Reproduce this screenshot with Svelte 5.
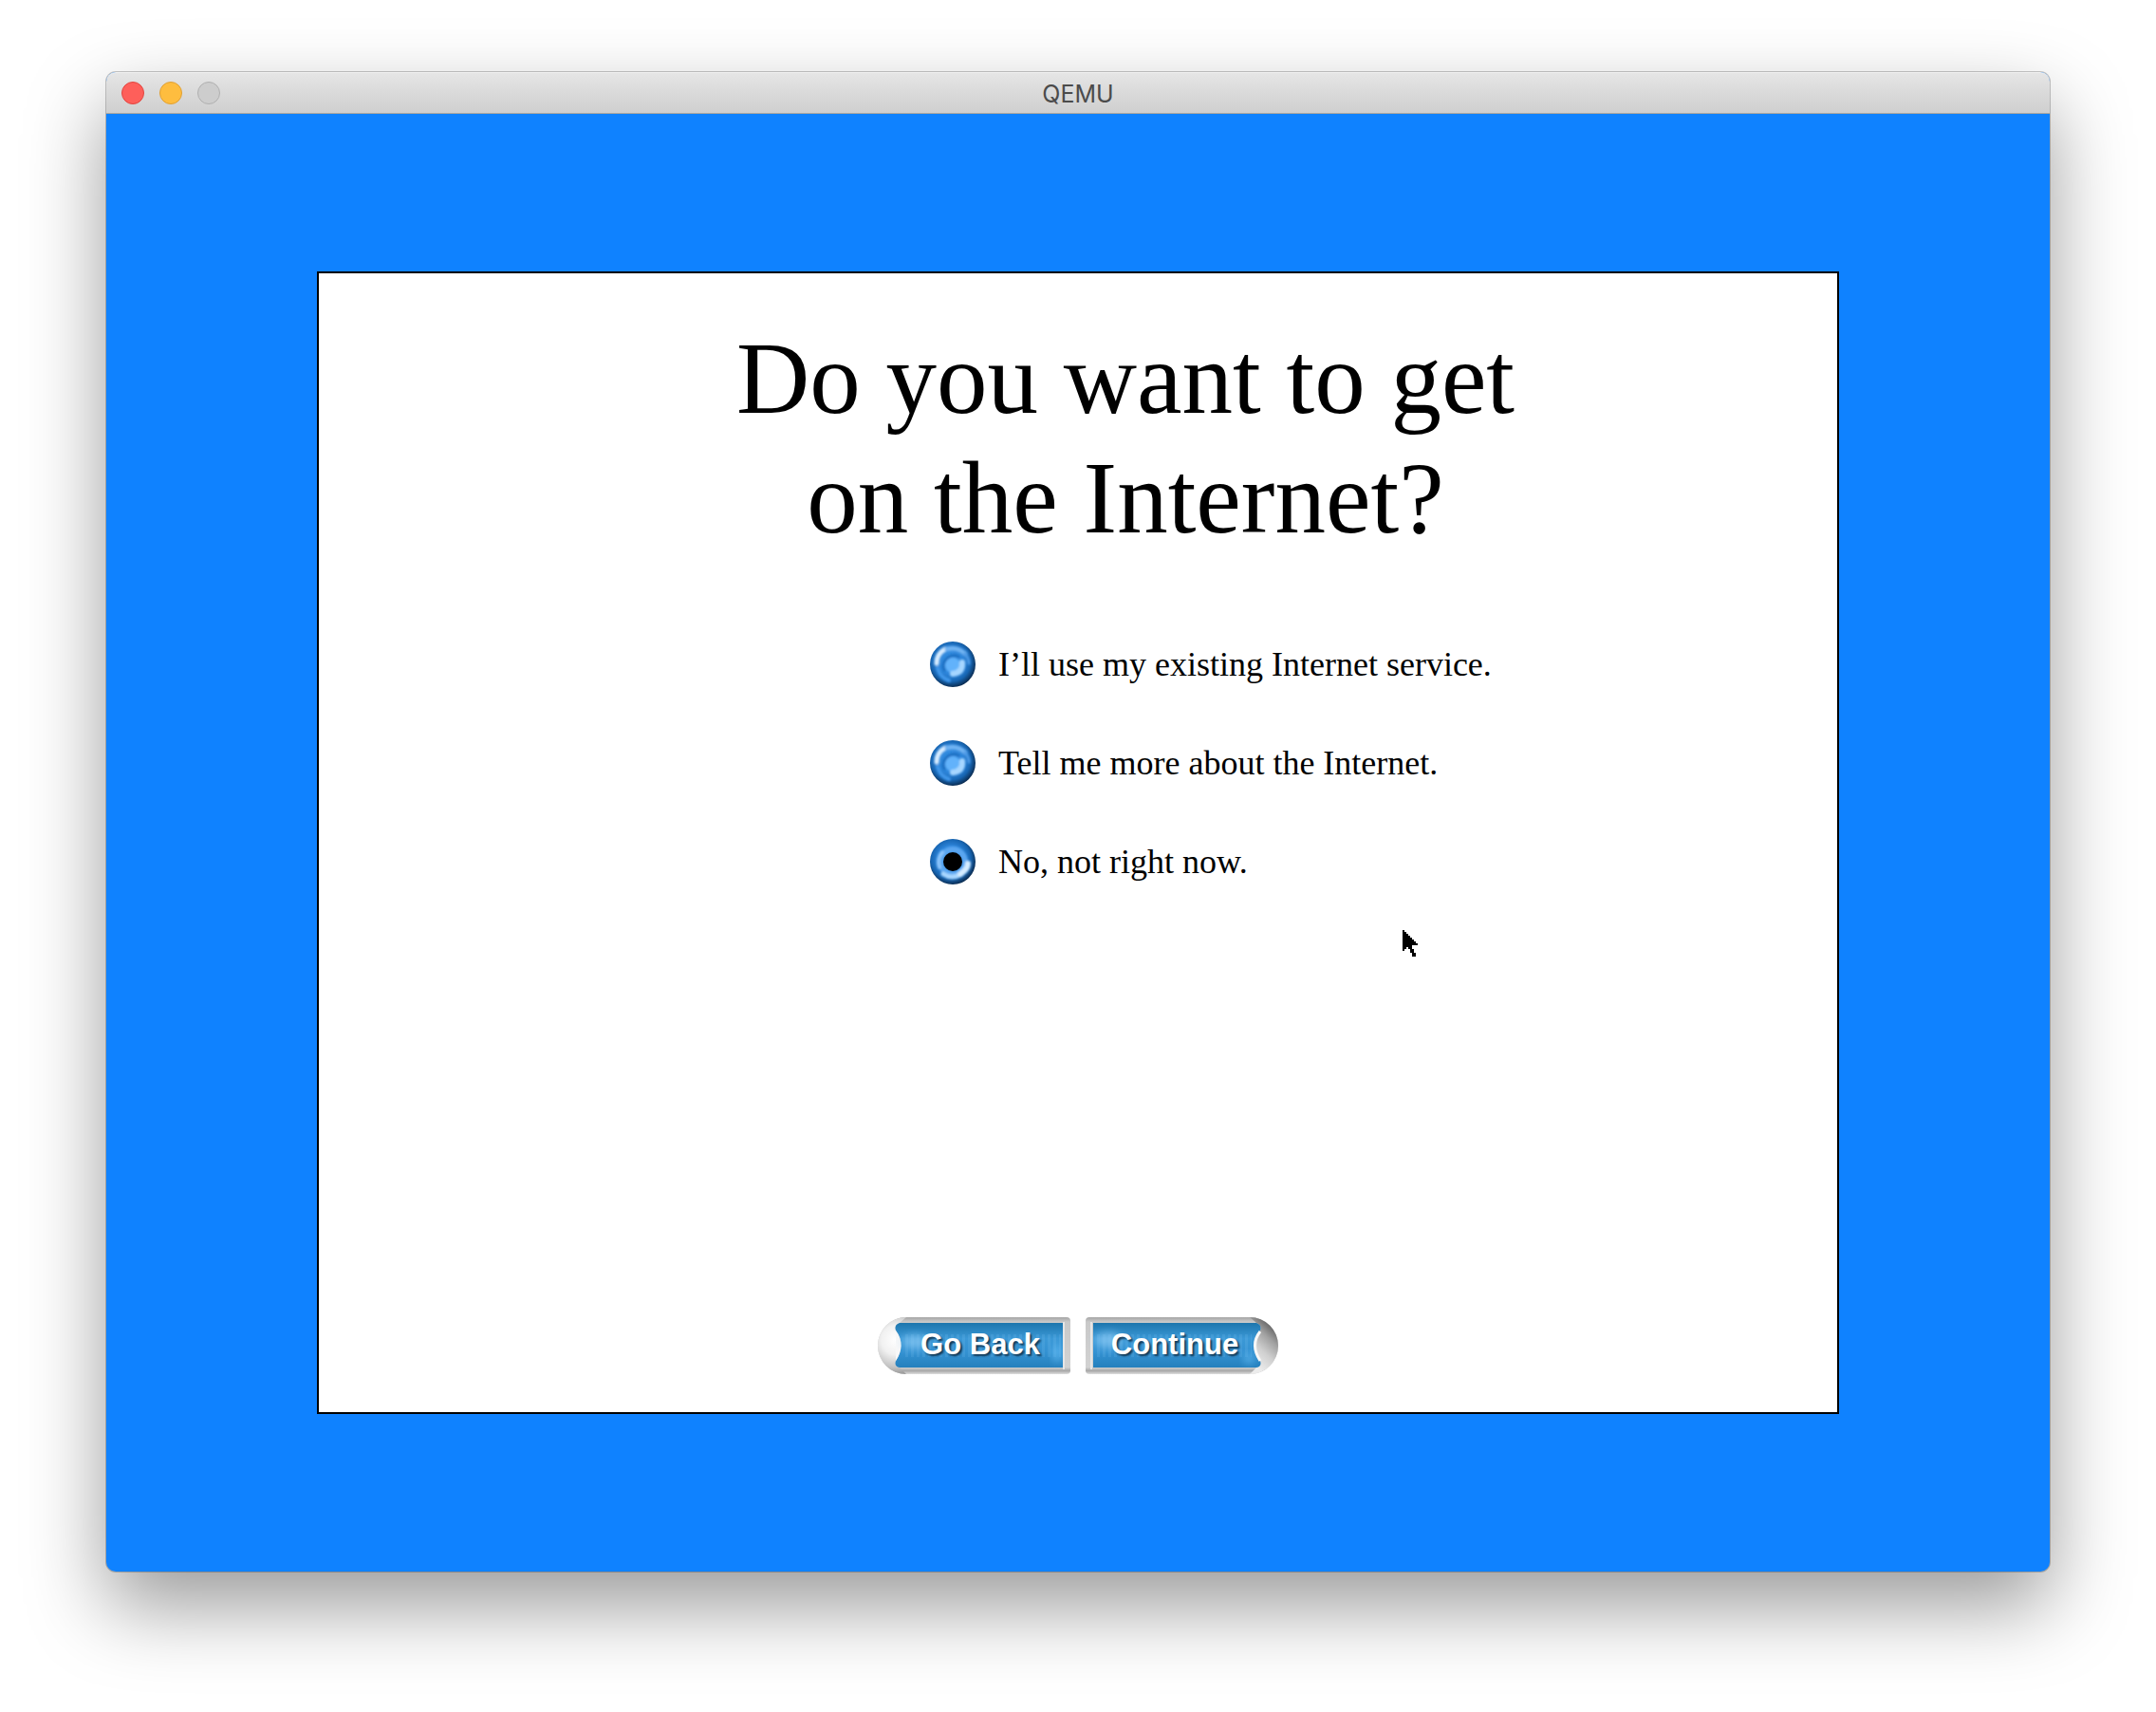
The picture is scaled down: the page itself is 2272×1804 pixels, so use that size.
<script>
  const options = [
    { value: 'existing', label: 'I’ll use my existing Internet service.' },
    { value: 'more', label: 'Tell me more about the Internet.' },
    { value: 'no', label: 'No, not right now.' }
  ];
  let choice = $state('no');
</script>

<svelte:head><title>QEMU</title></svelte:head>

<div class="page">
  <section class="window">
    <header class="titlebar">
      <div class="lights">
        <button class="light close" aria-label="Close"></button>
        <button class="light minimise" aria-label="Minimise"></button>
        <button class="light zoom" aria-label="Zoom" disabled></button>
      </div>
      <span class="title">QEMU</span>
    </header>

    <div class="desktop">
      <main class="card">
        <h1>Do you want to get<br />on the Internet?</h1>

        <div class="options" role="radiogroup" aria-label="Internet setup">
          {#each options as option}
            <label class="option">
              <span class="radio">
                <input type="radio" name="internet" value={option.value} bind:group={choice} />
                <svg viewBox="0 0 48 48" aria-hidden="true">
                  <defs>
                    <radialGradient id="ball-{option.value}" cx="0.46" cy="0.44" r="0.57">
                      <stop offset="0" stop-color="#3f97ea" />
                      <stop offset="0.5" stop-color="#2b83d8" />
                      <stop offset="0.76" stop-color="#1765b2" />
                      <stop offset="1" stop-color="#0a2a4e" />
                    </radialGradient>
                    <filter id="soft-{option.value}" x="-50%" y="-50%" width="200%" height="200%">
                      <feGaussianBlur stdDeviation="1.3" />
                    </filter>
                  </defs>
                  <circle cx="24" cy="24" r="24" fill="url(#ball-{option.value})" />
                  {#if choice === option.value}
                    <g filter="url(#soft-{option.value})" fill="none" stroke-linecap="round">
                      <circle cx="24" cy="24" r="13" stroke="#5aa6f0" stroke-width="6" />
                      <path d="M13 14A15 15 0 0 0 10 30" stroke="#8cc5fb" stroke-width="4" />
                      <path d="M14 37Q23 43 33 37" stroke="#a9d7ff" stroke-width="5" />
                      <path d="M32 37Q40 32 40 26" stroke="#d5ecff" stroke-width="6" />
                    </g>
                    <circle cx="24" cy="24" r="10" fill="#000" />
                  {:else}
                    <g filter="url(#soft-{option.value})" fill="none" stroke-linecap="round">
                      <path d="M7 23Q7 13 16 8" stroke="#d6ebff" stroke-width="5" />
                      <path d="M18 8Q29 5 37 13" stroke="#6fb2f2" stroke-width="5" />
                      <path d="M37 13Q41 18 41 23" stroke="#4d9ae6" stroke-width="3" />
                      <path d="M8 28Q11 38 20 41" stroke="#3f96e9" stroke-width="4" />
                      <circle cx="24" cy="25" r="8" fill="#62b2fb" stroke="none" />
                      <path d="M15 30A11 11 0 0 1 30 16" stroke="#1b6fc2" stroke-width="3" />
                      <path d="M24 34Q35 33 34 22" stroke="#a6d6ff" stroke-width="6" />
                    </g>
                  {/if}
                </svg>
              </span>
              <span>{option.label}</span>
            </label>
          {/each}
        </div>

        <div class="actions">
          <button class="nav">
            <svg viewBox="0 0 204 60" aria-hidden="true">
              <defs>
                <linearGradient id="face" x1="0" y1="0" x2="0" y2="1">
                  <stop offset="0" stop-color="#1d76ad" />
                  <stop offset="0.35" stop-color="#3b98d6" />
                  <stop offset="0.65" stop-color="#3492d2" />
                  <stop offset="1" stop-color="#2580bd" />
                </linearGradient>
                <linearGradient id="rim" x1="0" y1="0" x2="0" y2="1">
                  <stop offset="0" stop-color="#a5a5a5" />
                  <stop offset="0.08" stop-color="#c9c9c9" />
                  <stop offset="0.88" stop-color="#d2d2d2" />
                  <stop offset="0.94" stop-color="#a8a8a8" />
                  <stop offset="1" stop-color="#dedede" />
                </linearGradient>
                <radialGradient id="cap-left" gradientUnits="userSpaceOnUse" cx="20" cy="24" r="38">
                  <stop offset="0" stop-color="#fff" />
                  <stop offset="0.4" stop-color="#f1f1f1" />
                  <stop offset="0.75" stop-color="#c4c4c4" />
                  <stop offset="1" stop-color="#909090" />
                </radialGradient>
                <pattern id="ribs" width="6" height="60" patternUnits="userSpaceOnUse">
                  <rect width="3" height="60" fill="#8fd0fa" opacity="0.14" />
                </pattern>
                <filter id="glow" x="-50%" y="-50%" width="200%" height="200%">
                  <feGaussianBlur stdDeviation="4" />
                </filter>
              </defs>
              <path d="M31 0H200Q204 0 204 4V56Q204 60 200 60H31A30 30 0 0 1 31 0Z" fill="url(#rim)" />
              <path d="M31 0A30 30 0 0 0 31 60L24 53Q18 52 20 46V14Q18 8 24 6Z" fill="url(#cap-left)" />
              <path d="M24 6H196V53H24Q18 52 20 46Q31 29 20 14Q18 8 24 6Z" fill="url(#face)" />
              <path d="M20 14Q31 29 20 46V14Z" fill="#f8f8f8" />
              <path d="M30 18H194V42H30Z" fill="url(#ribs)" />
              <ellipse cx="40" cy="26" rx="13" ry="7" fill="#8ccbf6" opacity="0.7" filter="url(#glow)" />
              <ellipse cx="190" cy="38" rx="4" ry="10" fill="#70c8ff" opacity="0.7" filter="url(#glow)" />
              <path d="M197 5V55" stroke="#e6e6e6" stroke-width="2" />
            </svg>
            <span>Go Back</span>
          </button>
          <button class="nav">
            <svg viewBox="0 0 204 60" aria-hidden="true">
              <defs>
                <linearGradient id="cap-right" gradientUnits="userSpaceOnUse" x1="174" y1="46" x2="202" y2="16">
                  <stop offset="0" stop-color="#ececec" />
                  <stop offset="0.4" stop-color="#cfcfcf" />
                  <stop offset="0.75" stop-color="#a0a0a0" />
                  <stop offset="1" stop-color="#6c6c6c" />
                </linearGradient>
              </defs>
              <path d="M4 0H173A30 30 0 0 1 173 60H4Q0 60 0 56V4Q0 0 4 0Z" fill="url(#rim)" />
              <path d="M173 0A30 30 0 0 1 173 60L180 53Q186 52 184 46Q173 29 184 14Q186 8 180 6Z" fill="url(#cap-right)" />
              <path d="M8 6H180Q186 8 184 14Q173 29 184 46Q186 52 180 53H8Z" fill="url(#face)" />
              <path d="M9 18H175V42H9Z" fill="url(#ribs)" />
              <ellipse cx="24" cy="24" rx="14" ry="8" fill="#8ccbf6" opacity="0.7" filter="url(#glow)" />
              <ellipse cx="172" cy="44" rx="5" ry="5" fill="#70c8ff" opacity="0.7" filter="url(#glow)" />
              <path d="M184 15Q173 29 184 46" fill="none" stroke="#f7f7f7" stroke-width="3" />
              <path d="M6 5V55" stroke="#e6e6e6" stroke-width="2" />
            </svg>
            <span>Continue</span>
          </button>
        </div>

        <svg class="pointer" viewBox="0 0 8 14" shape-rendering="crispEdges" aria-hidden="true">
          <path d="M0 0H1V1H2V2H3V3H4V4H5V5H6V6H7V7H8V8H5V10H6V12H7V14H5V12H4V10H3V9H2V10H1V11H0Z" />
        </svg>
      </main>
    </div>
  </section>
</div>

<style>
  :global(body) {
    margin: 0;
    background: #fff;
  }

  .page {
    box-sizing: border-box;
    min-height: 100vh;
    padding: 76px 112px 148px;
    display: flex;
    overflow: hidden;
  }

  .window {
    flex: 1;
    display: flex;
    flex-direction: column;
    border-radius: 10px;
    background: #0f82ff;
    box-shadow:
      0 0 0 1px rgba(0, 0, 0, 0.22),
      0 36px 84px rgba(0, 0, 0, 0.4);
  }

  .titlebar {
    box-sizing: border-box;
    height: 44px;
    padding: 0 16px;
    display: grid;
    grid-template-columns: 1fr auto 1fr;
    align-items: center;
    border-radius: 10px 10px 0 0;
    border-top: 1px solid #f2f2f2;
    border-bottom: 1px solid #aaa6a0;
    background: linear-gradient(#e5e5e5, #cfcfcf);
  }

  .lights {
    display: flex;
    gap: 16px;
  }

  .light {
    width: 24px;
    height: 24px;
    padding: 0;
    border: 1px solid #b0b0b0;
    border-radius: 50%;
    background: #cdcdcd;
  }

  .close {
    border-color: #e2453f;
    background: #fe5f5a;
  }

  .minimise {
    border-color: #e0a033;
    background: #febd3f;
  }

  .title {
    padding-top: 2px;
    font: 25px/32px Inter, 'Liberation Sans', sans-serif;
    color: #4b4b4b;
  }

  .desktop {
    flex: 1;
    padding: 166px 222px;
    display: flex;
  }

  .card {
    position: relative;
    flex: 1;
    padding: 48px 0 40px;
    display: flex;
    flex-direction: column;
    border: 2px solid #000;
    background: #fff;
    color: #000;
    font-family: 'Liberation Serif', serif;
  }

  h1 {
    margin: 0 0 88px;
    padding-left: 100px;
    text-align: center;
    font-size: 107px;
    line-height: 126px;
    font-weight: 400;
  }

  .options {
    margin-left: 644px;
    display: flex;
    flex-direction: column;
    align-items: flex-start;
    gap: 56px;
  }

  .option {
    display: flex;
    align-items: center;
    gap: 24px;
    font-size: 36px;
    line-height: 48px;
  }

  .radio {
    position: relative;
    width: 48px;
    height: 48px;
  }

  .radio input {
    position: absolute;
    inset: 0;
    width: 100%;
    height: 100%;
    margin: 0;
    opacity: 0;
  }

  .radio svg {
    display: block;
    width: 48px;
    height: 48px;
    pointer-events: none;
  }

  .actions {
    margin-top: auto;
    display: flex;
    justify-content: center;
    gap: 16px;
  }

  .nav {
    position: relative;
    width: 204px;
    height: 60px;
    padding: 0 0 2px;
    border: 0;
    background: none;
    color: #fff;
    font: bold 31px/36px 'Liberation Sans', Arial, sans-serif;
    text-shadow: 2px 2px 2px #123a58;
  }

  .nav:first-child {
    padding-left: 14px;
  }

  .nav:last-child {
    padding-right: 16px;
  }

  .nav svg {
    position: absolute;
    inset: 0;
    width: 100%;
    height: 100%;
  }

  .nav span {
    position: relative;
  }

  .pointer {
    position: absolute;
    left: 1142px;
    top: 692px;
    width: 16px;
    height: 28px;
  }
</style>
